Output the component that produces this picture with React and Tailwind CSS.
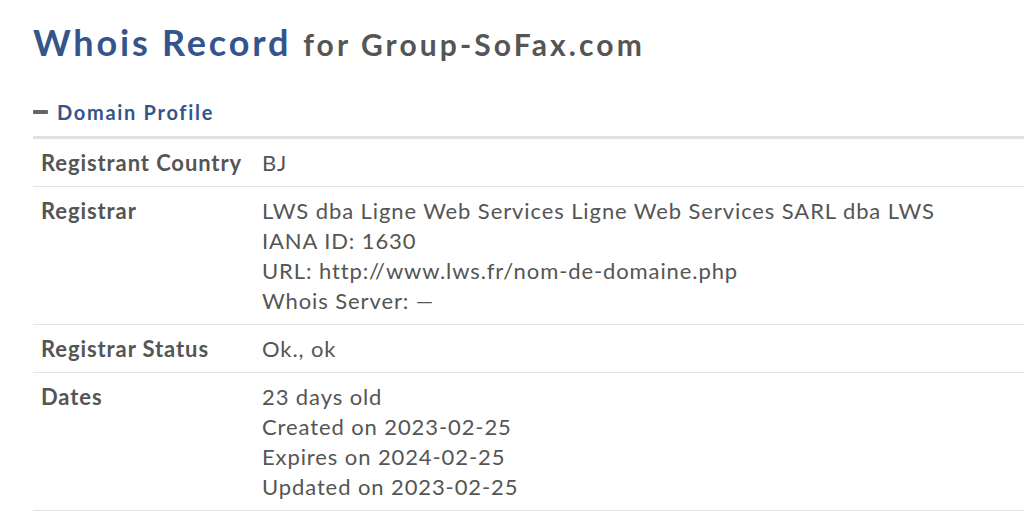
const ROWS = [
  { label: "Registrant Country", lines: ["BJ"] },
  {
    label: "Registrar",
    lines: [
      "LWS dba Ligne Web Services Ligne Web Services SARL dba LWS",
      "IANA ID: 1630",
      "URL: http://www.lws.fr/nom-de-domaine.php",
      "Whois Server: —",
    ],
  },
  { label: "Registrar Status", lines: ["Ok., ok"] },
  {
    label: "Dates",
    lines: [
      "23 days old",
      "Created on 2023-02-25",
      "Expires on 2024-02-25",
      "Updated on 2023-02-25",
    ],
  },
];

export default function App() {
  return (
    <div className="min-h-[517px] bg-white pl-[33px] font-['Lato',sans-serif] text-[#555]">
      {/* title */}
      <h1 className="pt-[18px] leading-[48px] font-bold">
        <span className="text-[36px] tracking-[2.8px] text-[#34558b]">Whois Record</span>
        <span className="ml-[12px] text-[30px] tracking-[3.1px] text-[#555]">for Group-SoFax.com</span>
      </h1>

      {/* section header */}
      <div className="mt-[26px] flex items-center gap-[9px] pb-[12px] border-b-[3px] border-[#e2e2e2]">
        <span className="block w-[15px] h-[4px] rounded-[1px] bg-[#666]" />
        <span className="text-[20px] leading-[24px] tracking-[1.7px] font-bold text-[#34558b]">Domain Profile</span>
      </div>

      {/* rows */}
      <div>
        {ROWS.map((r) => (
          <div key={r.label} className="flex border-b border-[#e5e5e5] pt-[9px] pb-[8px] text-[22px] leading-[30px] tracking-[0.9px]">
            <div className="w-[221px] shrink-0 pl-2 font-bold">{r.label}</div>
            <div className="pl-2">
              {r.lines.map((l) => (
                <div key={l}>{l}</div>
              ))}
            </div>
          </div>
        ))}
      </div>
    </div>
  );
}
